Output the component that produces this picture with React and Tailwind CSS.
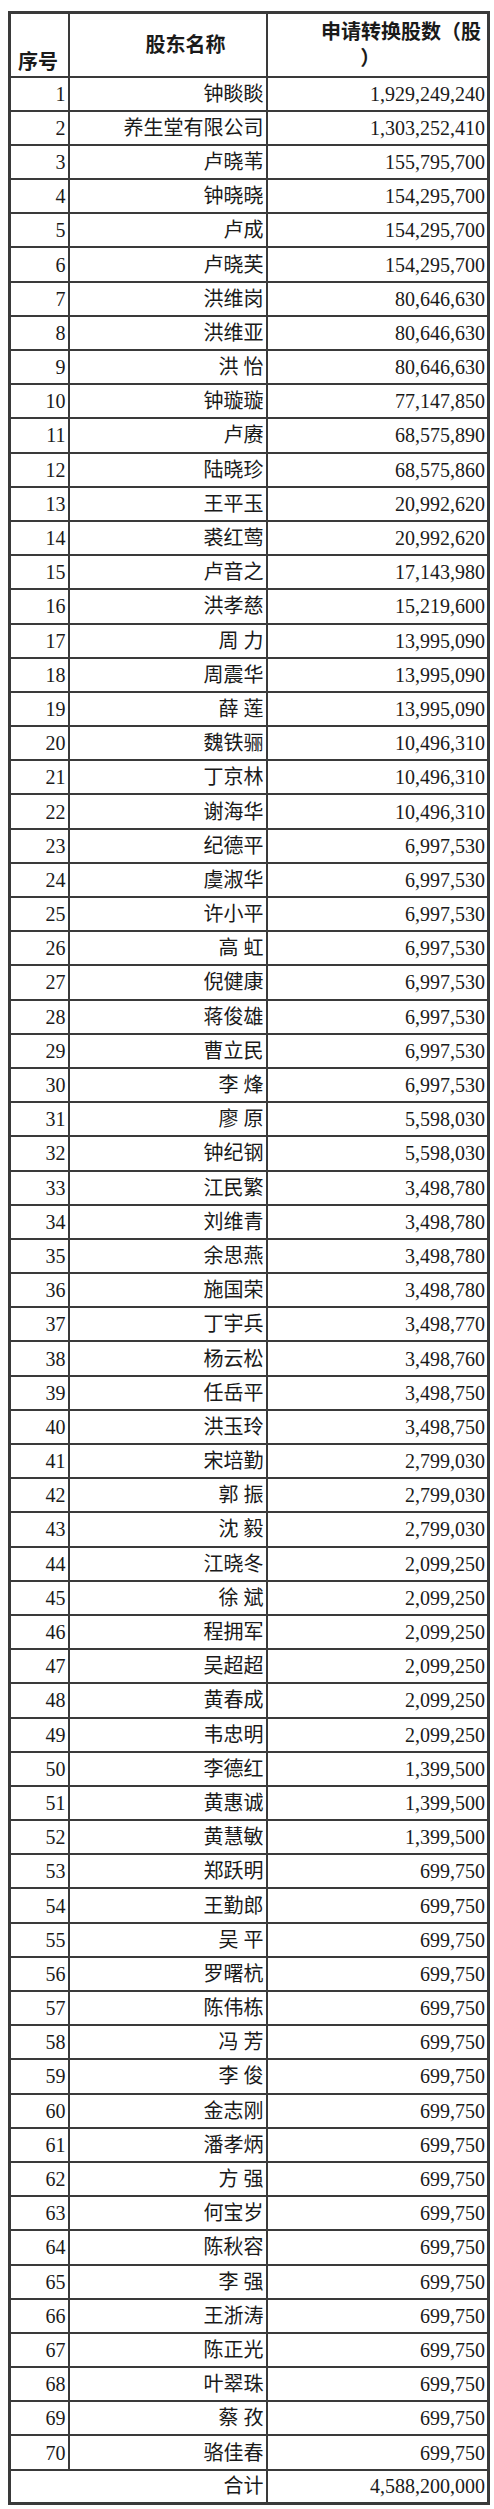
import React from "react";

const rows = [
  ["钟睒睒", "1,929,249,240"],
  ["养生堂有限公司", "1,303,252,410"],
  ["卢晓苇", "155,795,700"],
  ["钟晓晓", "154,295,700"],
  ["卢成", "154,295,700"],
  ["卢晓芙", "154,295,700"],
  ["洪维岗", "80,646,630"],
  ["洪维亚", "80,646,630"],
  ["洪 怡", "80,646,630"],
  ["钟璇璇", "77,147,850"],
  ["卢赓", "68,575,890"],
  ["陆晓珍", "68,575,860"],
  ["王平玉", "20,992,620"],
  ["裘红莺", "20,992,620"],
  ["卢音之", "17,143,980"],
  ["洪孝慈", "15,219,600"],
  ["周 力", "13,995,090"],
  ["周震华", "13,995,090"],
  ["薛 莲", "13,995,090"],
  ["魏铁骊", "10,496,310"],
  ["丁京林", "10,496,310"],
  ["谢海华", "10,496,310"],
  ["纪德平", "6,997,530"],
  ["虞淑华", "6,997,530"],
  ["许小平", "6,997,530"],
  ["高 虹", "6,997,530"],
  ["倪健康", "6,997,530"],
  ["蒋俊雄", "6,997,530"],
  ["曹立民", "6,997,530"],
  ["李 烽", "6,997,530"],
  ["廖 原", "5,598,030"],
  ["钟纪钢", "5,598,030"],
  ["江民繁", "3,498,780"],
  ["刘维青", "3,498,780"],
  ["余思燕", "3,498,780"],
  ["施国荣", "3,498,780"],
  ["丁宇兵", "3,498,770"],
  ["杨云松", "3,498,760"],
  ["任岳平", "3,498,750"],
  ["洪玉玲", "3,498,750"],
  ["宋培勤", "2,799,030"],
  ["郭 振", "2,799,030"],
  ["沈 毅", "2,799,030"],
  ["江晓冬", "2,099,250"],
  ["徐 斌", "2,099,250"],
  ["程拥军", "2,099,250"],
  ["吴超超", "2,099,250"],
  ["黄春成", "2,099,250"],
  ["韦忠明", "2,099,250"],
  ["李德红", "1,399,500"],
  ["黄惠诚", "1,399,500"],
  ["黄慧敏", "1,399,500"],
  ["郑跃明", "699,750"],
  ["王勤郎", "699,750"],
  ["吴 平", "699,750"],
  ["罗曙杭", "699,750"],
  ["陈伟栋", "699,750"],
  ["冯 芳", "699,750"],
  ["李 俊", "699,750"],
  ["金志刚", "699,750"],
  ["潘孝炳", "699,750"],
  ["方 强", "699,750"],
  ["何宝岁", "699,750"],
  ["陈秋容", "699,750"],
  ["李 强", "699,750"],
  ["王浙涛", "699,750"],
  ["陈正光", "699,750"],
  ["叶翠珠", "699,750"],
  ["蔡 孜", "699,750"],
  ["骆佳春", "699,750"],
];

const cell = "border-2 border-[#3a3a3a] px-[2px] text-right align-middle whitespace-pre leading-none";

function App() {
  return (
    <div
      className="bg-white pt-[11px] pl-[8px] pb-[3px] text-[20px] text-[#1a1a1a]"
      style={{ fontFamily: '"Liberation Serif", "Noto Sans CJK SC", serif' }}
    >
      <table className="w-[479px] table-fixed border-collapse border-[3px] border-[#3a3a3a]">
        <colgroup>
          <col className="w-[59px]" />
          <col className="w-[198px]" />
          <col className="w-[222px]" />
        </colgroup>
        <thead>
          <tr className="h-[64px]">
            <th className="border-2 border-[#3a3a3a] pl-[7px] pb-[4px] text-left align-bottom font-bold leading-none">
              序号
            </th>
            <th className="border-2 border-[#3a3a3a] pl-[76px] text-left align-middle font-bold leading-none">
              股东名称
            </th>
            <th className="border-2 border-[#3a3a3a] align-middle font-bold leading-[26px]">
              <div className="pr-[6px] text-right">申请转换股数（股</div>
              <div className="pr-[14px] text-center">）</div>
            </th>
          </tr>
        </thead>
        <tbody>
          {rows.map((r, i) => (
            <tr key={i} className="h-[34.2px]">
              <td className={cell}>{i + 1}</td>
              <td className={cell}>{r[0]}</td>
              <td className={cell}>{r[1]}</td>
            </tr>
          ))}
          <tr className="h-[34.2px]">
            <td colSpan={2} className={cell}>
              合计
            </td>
            <td className={cell}>4,588,200,000</td>
          </tr>
        </tbody>
      </table>
    </div>
  );
}

export default App;
